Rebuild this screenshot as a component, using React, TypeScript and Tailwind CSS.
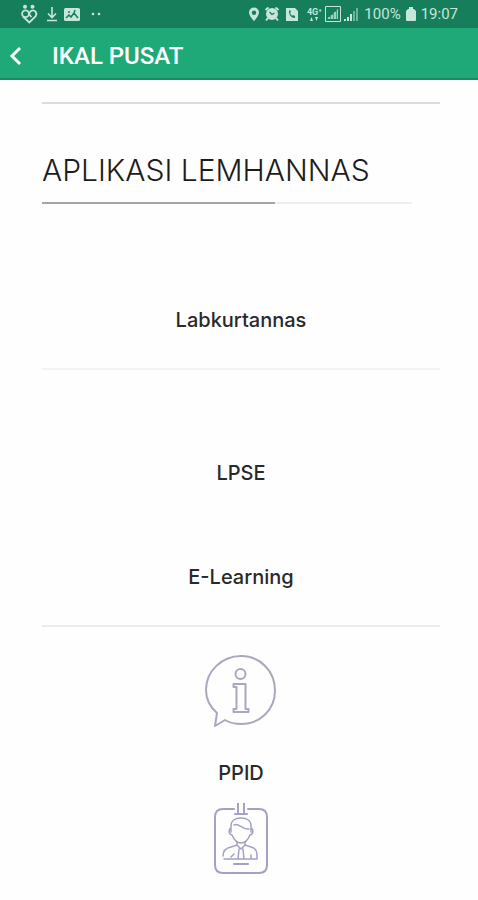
import { ReactNode } from 'react'

interface ItemProps {
  label: string
  className?: string
  children?: ReactNode
}

function StatusBar() {
  return (
    <div className="flex h-7 items-center justify-between bg-[#167e5a] px-5 text-[#c5e6d8]">
      <div className="flex items-center gap-2">
        <svg className="h-5 w-5" viewBox="0 0 20 20" fill="none" stroke="currentColor" strokeWidth="1.800">
          <circle cx="5" cy="2.800" r="2" fill="currentColor" stroke="none" />
          <circle cx="12.500" cy="2.800" r="2" fill="currentColor" stroke="none" />
          <circle cx="5.500" cy="9.800" r="3.400" />
          <path d="M3 12.500 9.300 18.500 15.500 12.500C18 9 14.500 5 11 7C8.500 9 9 11 11.500 13" />
        </svg>
        <svg className="-mx-1 h-4 w-4" viewBox="0 0 16 16" fill="none" stroke="currentColor" strokeWidth="1.600">
          <path d="M8 1v10M4 7.500l4 4 4-4M3 14.500h10" />
        </svg>
        <svg className="h-4 w-4" viewBox="0 0 16 16">
          <rect y="2" width="16" height="13" rx="1.500" fill="currentColor" />
          <path d="m2 12 3-3 2 2 3-4 4 5M11 4l-1 3" fill="none" stroke="#167e5a" strokeWidth="1.500" />
          <circle cx="5" cy="6" r="1" fill="#167e5a" />
        </svg>
        <svg className="h-1 w-4" viewBox="0 0 16 4" fill="currentColor">
          <circle cx="5" cy="2" r="1.300" />
          <circle cx="11" cy="2" r="1.300" />
        </svg>
      </div>
      <div className="flex items-center gap-1">
        <svg className="h-4 w-3" viewBox="0 0 12 16">
          <path
            d="M6 1.500a5 5 0 0 0-5 5C1 10 6 15 6 15s5-5 5-8.500a5 5 0 0 0-5-5Zm0 3a2.200 2.200 0 1 1 0 4.400 2.200 2.200 0 0 1 0-4.400Z"
            fill="currentColor"
            fillRule="evenodd"
          />
        </svg>
        <svg className="h-4 w-4" viewBox="0 0 16 16">
          <path d="m1.500 4 3-2.500M14.500 4l-3-2.500M4 12l-2 2.500M12 12l2 2.500" stroke="currentColor" strokeWidth="2" />
          <circle cx="8" cy="8" r="6" fill="currentColor" />
          <path d="M5.500 6 8 8.500 10.500 7" fill="none" stroke="#167e5a" strokeWidth="1.300" />
        </svg>
        <svg className="h-4 w-4" viewBox="0 0 16 16">
          <path d="M2 2h9l3 3v10H2Z" fill="currentColor" />
          <path d="M5 5c0 4 2 7 6 7v-2l-2-1-1 1-2-3 1-1-1-2Z" fill="#167e5a" />
        </svg>
        <div className="flex w-5 flex-col items-center font-['Roboto',sans-serif] text-[9px] leading-[9px] font-bold">
          <span>4G⁺</span>
          <svg className="h-1 w-2" viewBox="0 0 8 4" fill="currentColor">
            <path d="M0 4h3L1.500 0ZM5 0h3L6.500 4Z" />
          </svg>
        </div>
        <svg className="-ml-1 h-[18px] w-9" viewBox="0 0 36 18" fill="currentColor">
          <path d="M1.500 1.500h15v15h-15Z" fill="none" stroke="currentColor" strokeWidth="1" />
          <path d="M3 14 14 4V14Z" opacity=".3" />
          <path d="M4 12h2v2H4ZM7 10h2v4H7ZM10 7h2v7h-2ZM13 4h1v10h-1Z" opacity=".7" />
          <path d="M20 14h2v2h-2ZM23 12h2v4h-2ZM26 9h2v7h-2Z" />
          <path d="M29 6h2v10h-2ZM32 3h2v13h-2Z" opacity=".5" />
        </svg>
        <span className="font-['Roboto',sans-serif] text-[15px] leading-5">100%</span>
        <svg className="h-4 w-3" viewBox="0 0 12 16" fill="currentColor">
          <path d="M4 1h4v2h1l2 2v9a1 1 0 0 1-1 1H2a1 1 0 0 1-1-1V5l2-2h1Z" />
        </svg>
        <span className="font-['Roboto',sans-serif] text-[15px] leading-5">19:07</span>
      </div>
    </div>
  )
}

function InfoIcon() {
  return (
    <svg
      className="h-[72px] w-[72px]"
      viewBox="0 0 72 72"
      fill="none"
      stroke="#a9a8bd"
      strokeWidth="2"
      strokeLinejoin="round"
    >
      <path d="M12 58C5 52 1 44 1 35C1 16 17 1 36 1S70 16 70 35.500S55 69 36 69C30 69 25 68 20 65L10 71Z" />
      <circle cx="35.500" cy="19" r="5" />
      <path d="M28.500 29H40.500V54H43.500V57H28.500V54H31.500V32H28.500Z" />
    </svg>
  )
}

function BadgeIcon() {
  return (
    <svg
      className="h-[72px] w-[54px]"
      viewBox="0 0 54 72"
      fill="none"
      stroke="#a3a2c4"
      strokeWidth="2"
      strokeLinecap="round"
      strokeLinejoin="round"
    >
      <path d="M20 6H9Q1 6 1 14V62Q1 70 9 70H45Q53 70 53 62V14Q53 6 45 6H34M21 11H33M24 0V11M30 0V11" />
      <g strokeWidth="1.500">
        <path d="M17 29V23C17 18 21 15 27 15S37 18 37 23V29M20 22C25 19 27 27 35 26M17 25C14 26 15 32 18 32C20 37 23 40 27 40S34 37 36 32C39 32 40 26 37 25" />
        <path d="M23 39V42L17 44C12 45 9 48 9 53M31 39V42L37 44C42 45 43 48 43 53V56H31M23 42L27 46 31 42M25 46L24 56H30L29 46M10 56H23M17 54L20 51M37 52V56" />
      </g>
      <path d="M20 61H34" />
    </svg>
  )
}

function Item({ label, className, children }: ItemProps) {
  return (
    <li className={className}>
      <a href="#" className="flex flex-col items-center">
        {children}
        <span className="text-xl leading-6 font-medium">{label}</span>
      </a>
    </li>
  )
}

export default function App() {
  return (
    <div className="min-h-screen bg-[#fefefe] font-['Inter',sans-serif] text-[#292929]">
      <header>
        <StatusBar />
        <div className="flex h-13 items-center gap-7 border-b-2 border-[#168c63] bg-[#1fa978] pt-1.5 pl-2 text-white">
          <button type="button" aria-label="Back">
            <svg className="h-5 w-4" viewBox="0 0 16 20" fill="none" stroke="currentColor" strokeWidth="3">
              <path d="M12 2 4 10l8 8" />
            </svg>
          </button>
          <h1 className="font-['Roboto',sans-serif] text-2xl leading-7 font-medium">IKAL PUSAT</h1>
        </div>
      </header>
      <main className="pt-[22px] pr-[38px] pl-[42px]">
        <hr className="border-t-2 border-[#dcdcdc]" />
        <h2 className="mt-[46px] text-3xl leading-10 font-light whitespace-nowrap text-[#1c1c1c]">
          APLIKASI LEMHANNAS
        </h2>
        <div className="mt-3 mr-7 h-[2px] bg-[#eeeeee]">
          <div className="h-full w-[63%] bg-[#a5a5a5]" />
        </div>
        <ul>
          <Item label="Labkurtannas" className="border-b-2 border-[#f3f3f3] pt-26 pb-9" />
          <Item label="LPSE" className="pt-[91px]" />
          <Item label="E-Learning" className="border-b-2 border-[#ebebeb] pt-20 pb-9" />
          <Item label="PPID" className="pt-7">
            <span className="mb-[34px]">
              <InfoIcon />
            </span>
          </Item>
        </ul>
        <a href="#" aria-label="ID card" className="mt-[18px] flex justify-center pb-6">
          <BadgeIcon />
        </a>
      </main>
    </div>
  )
}
